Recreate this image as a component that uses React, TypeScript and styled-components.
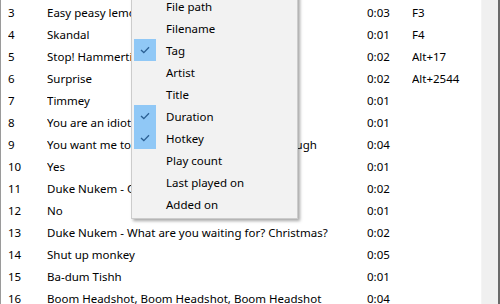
import React from "react";
import styled, { createGlobalStyle } from "styled-components";

const Global = createGlobalStyle`
  html, body { margin: 0; padding: 0; background: #ffffff; }
  body { font-family: "Noto Sans", "Open Sans", sans-serif; }
`;

const Frame = styled.div`
  position: relative;
  width: 500px;
  height: 304px;
  overflow: hidden;
  display: flex;
  background: #ffffff;
  border-left: 1px solid #9a9a9a;
  box-sizing: border-box;
`;

const List = styled.div`
  flex: 1;
  padding-top: 2px;
  display: flex;
  flex-direction: column;
`;

const Row = styled.div`
  display: grid;
  grid-template-columns: 39px 320px 45px 1fr;
  height: 22px;
  flex-shrink: 0;
  align-items: center;
  padding-left: 7px;
  font-size: 11.5px;
  line-height: 22px;
  color: #000000;
  white-space: nowrap;
`;

const Cell = styled.span`
  overflow: hidden;
  white-space: nowrap;
`;

const ScrollTrack = styled.div`
  width: 17px;
  background: #f0f0f0;
  border-left: 1px solid #f4f4f4;
  box-sizing: border-box;
`;

const EdgeLine = styled.div`
  width: 2px;
  background: #6a6a6a;
`;

const Menu = styled.div`
  position: absolute;
  left: 130px;
  top: -8px;
  width: 167px;
  box-sizing: border-box;
  background: #f2f2f2;
  border: 1px solid #cccccc;
  padding: 2px 2px 3px 2px;
  box-shadow: 2px 2px 3px rgba(0, 0, 0, 0.35);
  font-size: 11.5px;
  color: #000000;
`;

const Item = styled.div`
  display: flex;
  align-items: center;
  height: 22px;
`;

const CheckBox = styled.div<{ $on: boolean }>`
  width: 22px;
  height: 22px;
  display: flex;
  align-items: center;
  justify-content: center;
  background: ${(p) => (p.$on ? "#90c8f6" : "transparent")};
`;

const Label = styled.span`
  margin-left: 10px;
`;

const Check = () => (
  <svg width="10" height="8" viewBox="0 0 10 8">
    <path d="M1 4 L3.8 6.6 L9 1.2" fill="none" stroke="#2a5f93" strokeWidth="1.3" />
  </svg>
);

const rows: [string, string, string, string][] = [
  ["3", "Easy peasy lemon squeezy", "0:03", "F3"],
  ["4", "Skandal", "0:01", "F4"],
  ["5", "Stop! Hammertime", "0:02", "Alt+17"],
  ["6", "Surprise", "0:02", "Alt+2544"],
  ["7", "Timmey", "0:01", ""],
  ["8", "You are an idiot", "0:01", ""],
  ["9", "You want me to laugh? Laugh, laugh, laugh, laugh", "0:04", ""],
  ["10", "Yes", "0:01", ""],
  ["11", "Duke Nukem - Come get some", "0:02", ""],
  ["12", "No", "0:01", ""],
  ["13", "Duke Nukem - What are you waiting for? Christmas?", "0:02", ""],
  ["14", "Shut up monkey", "0:05", ""],
  ["15", "Ba-dum Tishh", "0:01", ""],
  ["16", "Boom Headshot, Boom Headshot, Boom Headshot", "0:04", ""],
];

const items: [string, boolean][] = [
  ["File path", false],
  ["Filename", false],
  ["Tag", true],
  ["Artist", false],
  ["Title", false],
  ["Duration", true],
  ["Hotkey", true],
  ["Play count", false],
  ["Last played on", false],
  ["Added on", false],
];

export default function App() {
  return (
    <>
      <Global />
      <Frame>
        <List>
          {rows.map((r) => (
            <Row key={r[0]}>
              <Cell>{r[0]}</Cell>
              <Cell>{r[1]}</Cell>
              <Cell>{r[2]}</Cell>
              <Cell>{r[3]}</Cell>
            </Row>
          ))}
        </List>
        <ScrollTrack />
        <EdgeLine />
        <Menu>
          {items.map(([label, on]) => (
            <Item key={label}>
              <CheckBox $on={on}>{on && <Check />}</CheckBox>
              <Label>{label}</Label>
            </Item>
          ))}
        </Menu>
      </Frame>
    </>
  );
}
